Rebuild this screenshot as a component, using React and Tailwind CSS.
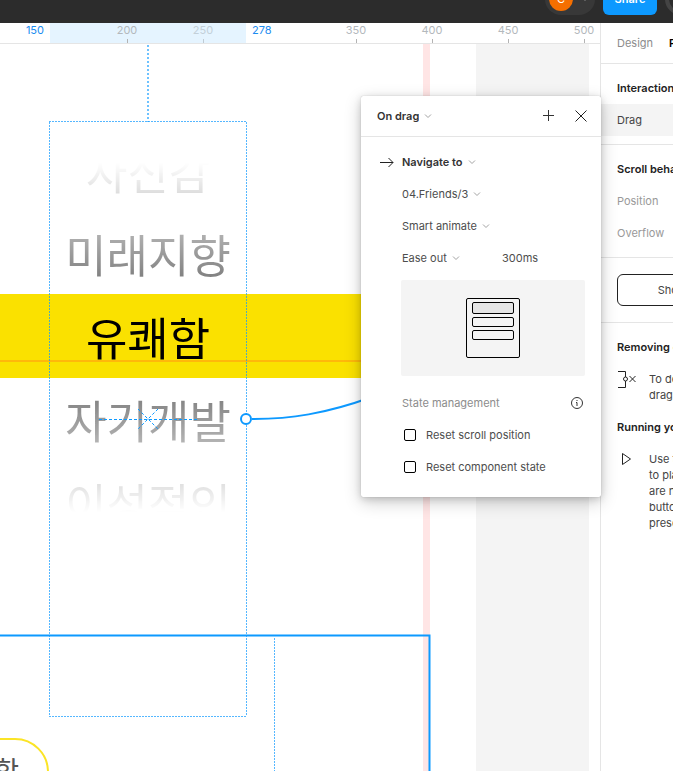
import React from "react";

function Chevron() {
  return (
    <svg width="8" height="8" viewBox="0 0 8 8" fill="none" stroke="#a3a3a3" aria-hidden="true" className="pointer-events-none shrink-0">
      <path d="M1 2.5 4 5.5 7 2.5" />
    </svg>
  );
}

function Dropdown({ label, value, strong }) {
  return (
    <span className="flex items-center gap-[5px]">
      <select
        aria-label={label}
        defaultValue={value}
        className={
          strong
            ? "field-sizing-content appearance-none bg-transparent font-semibold text-[#333]"
            : "field-sizing-content appearance-none bg-transparent text-[#4d4d4d]"
        }
      >
        <option>{value}</option>
      </select>
      <Chevron />
    </span>
  );
}

function Toolbar() {
  return (
    <header className="flex h-[23px] shrink-0 justify-end overflow-hidden bg-[#2c2c2c] font-['Inter',sans-serif] text-[11px]">
      <div className="flex w-32 items-end gap-2 pb-2">
        <button className="flex h-8 w-[50px] shrink-0 items-center gap-2 rounded-full bg-[#383838] pl-1 text-white">
          <span className="flex size-6 items-center justify-center rounded-full bg-[#f56f00]">C</span>
          <svg width="8" height="8" viewBox="0 0 8 8" fill="none" stroke="#8c8c8c" aria-hidden="true">
            <path d="M1 2.5 4 5.5 7 2.5" />
          </svg>
        </button>
        <button className="h-8 w-[54px] shrink-0 rounded-md bg-[#0d99ff] font-semibold text-white">Share</button>
        <button aria-label="Present" className="h-8 w-16 shrink-0 rounded-full border-4 border-[#444]" />
      </div>
    </header>
  );
}

function RulerMark({ value, faint }) {
  return (
    <div className="flex w-[76px] shrink-0 flex-col items-center justify-between">
      <span className={faint ? "text-[#c3d0d9]" : "text-[#b3b8bc]"}>{value}</span>
      <span className={faint ? "h-1 w-px bg-[#c0cbd3]" : "h-1 w-px bg-[#b3b3b3]"} />
    </div>
  );
}

function Ruler() {
  return (
    <div className="flex h-[21px] shrink-0 overflow-hidden border-b border-[#e5e5e5] bg-white text-[11px] leading-[15px]">
      <span className="w-[50px] shrink-0 pr-[6px] text-right text-[#1c8cf0]">150</span>
      <div className="flex w-[196px] shrink-0 bg-[#e5f4ff] pl-[39px]">
        <RulerMark value="200" />
        <RulerMark value="250" faint />
      </div>
      <span className="w-[72px] shrink-0 pl-[6px] text-[#1c8cf0]">278</span>
      <RulerMark value="350" />
      <RulerMark value="400" />
      <RulerMark value="450" />
      <RulerMark value="500" />
    </div>
  );
}

const WORDS = ["자신감", "미래지향", "유쾌함", "자기개발", "이성적인"];

function Canvas() {
  return (
    <div className="relative min-h-0 flex-1 overflow-hidden bg-white">
      <div className="absolute inset-y-0 left-[423px] w-[7px] bg-[#ffe5e5]" />
      <div className="absolute inset-y-0 left-[476px] w-[113px] bg-[#f4f4f4]" />
      <div className="absolute top-[250px] left-0 h-[84px] w-[430px] bg-[#fae100]">
        <div className="mt-[66px] h-[2px] bg-[#ffb80a]" />
      </div>

      <div className="absolute top-[85px] left-[50px] flex w-[196px] flex-col text-center font-['Noto_Sans_CJK_KR',sans-serif] text-[45px] leading-[83px] text-black [mask-image:linear-gradient(to_bottom,transparent_34px,rgba(0,0,0,0.5)_150px,rgba(0,0,0,0.5)_165px,black_165px,black_249px,rgba(0,0,0,0.52)_249px,rgba(0,0,0,0.47)_273px,transparent_383px)]">
        {WORDS.map((word) => (
          <span key={word}>{word}</span>
        ))}
      </div>

      <div className="absolute top-[694px] -left-40 flex h-20 w-[209px] justify-end rounded-[34px] border-2 border-[#fbe426] bg-white pt-[14px] pr-7 font-['Noto_Sans_CJK_KR',sans-serif] text-[27px] leading-8 text-[#555]">
        유쾌함
      </div>

      <svg className="absolute inset-0" width="600" height="728" viewBox="0 44 600 728" fill="none" stroke="#0d99ff" aria-hidden="true">
        <path d="M148 45V122" strokeWidth="2" strokeOpacity=".6" strokeDasharray="2 2" />
        <path d="M49.5 122V716M246.5 122V716M49 121.5H247M49 716.5H247" strokeOpacity=".7" strokeDasharray="2 1" />
        <path d="M0 635.5H429.5V780" strokeWidth="2" />
        <path d="M274.5 638V780" strokeOpacity=".7" strokeDasharray="2 1" />
        <path d="M99 419.5H197M138 409 148 419 138 429M158 409 148 419 158 429" strokeDasharray="3 2" />
        <path d="M252 419C290 419 325 414 372 397" strokeWidth="2" />
        <circle cx="246" cy="419" r="5" fill="white" strokeWidth="2" />
      </svg>
    </div>
  );
}

function CheckRow({ label }) {
  return (
    <label className="flex h-8 items-center gap-[10px] pl-[3px]">
      <input type="checkbox" className="size-3 appearance-none rounded-[2px] border border-black bg-white" />
      {label}
    </label>
  );
}

function InteractionPanel() {
  return (
    <section className="absolute top-[96px] right-[72px] w-60 rounded-[2px] bg-white pb-[14px] font-['Inter',sans-serif] text-[11px] leading-4 text-[#4d4d4d] shadow-[0_5px_17px_rgba(0,0,0,0.2),0_2px_7px_rgba(0,0,0,0.15),0_0_1px_rgba(0,0,0,0.3)]">
      <div className="flex h-[41px] items-center border-b border-[#e5e5e5] pr-[14px] pl-4">
        <Dropdown label="Trigger" value="On drag" strong />
        <button aria-label="Add action" className="ml-auto">
          <svg width="12" height="12" viewBox="0 0 12 12" stroke="#333" aria-hidden="true">
            <path d="M5.5 0V11M0 5.5H11" />
          </svg>
        </button>
        <button aria-label="Close" className="ml-5">
          <svg width="12" height="12" viewBox="0 0 12 12" stroke="#222" aria-hidden="true">
            <path d="M.5 .5 11.500 11.500M11.500 .5 .5 11.500" />
          </svg>
        </button>
      </div>
      <div className="flex pt-[9px] pr-4">
        <div className="flex h-8 w-10 shrink-0 items-center justify-end pr-[7px]">
          <svg width="14" height="11" viewBox="0 0 14 11" fill="none" stroke="#222" aria-hidden="true">
            <path d="M0 5.500H13M8.500 1 13 5.500 8.500 10" />
          </svg>
        </div>
        <div className="flex flex-1 flex-col">
          <div className="flex h-8 items-center pl-px"><Dropdown label="Action" value="Navigate to" strong /></div>
          <div className="flex h-8 items-center pl-px"><Dropdown label="Destination" value="04.Friends/3" /></div>
          <div className="flex h-8 items-center pl-px"><Dropdown label="Animation" value="Smart animate" /></div>
          <div className="flex h-8 items-center pl-px">
            <div className="w-[100px]"><Dropdown label="Easing" value="Ease out" /></div>
            <input aria-label="Duration" defaultValue="300ms" className="w-16 bg-transparent" />
          </div>
          <div className="mt-[6px] mb-[11px] flex h-24 items-center justify-center rounded-[2px] bg-[#f4f4f4]">
            <svg width="54" height="60" viewBox="0 0 54 60" fill="none" stroke="black" aria-hidden="true">
              <rect x=".5" y=".5" width="53" height="59" rx="1.5" />
              <rect x="6.5" y="4.5" width="41" height="11" rx="1.5" fill="#e5e5e5" />
              <rect x="6.5" y="19.5" width="41" height="9" rx="1.5" />
              <rect x="6.5" y="32.5" width="41" height="9" rx="1.5" />
            </svg>
          </div>
          <div className="flex h-8 items-center justify-between pr-[2px] pl-px text-[#8c8c8c]">
            State management
            <svg width="12" height="12" viewBox="0 0 12 12" fill="none" stroke="#333" aria-hidden="true">
              <circle cx="6" cy="6" r="5.5" />
              <path d="M5 5.5H6V9M6 3V4" />
            </svg>
          </div>
          <CheckRow label="Reset scroll position" />
          <CheckRow label="Reset component state" />
        </div>
      </div>
    </section>
  );
}

function Sidebar() {
  return (
    <aside className="w-[73px] shrink-0 overflow-hidden border-l border-[#e5e5e5] bg-white text-[11px] leading-4 text-[#444]">
      <div className="w-60">
        <nav className="flex h-[41px] items-center gap-4 border-b border-[#e5e5e5] px-4">
          <a href="#design" className="text-[#8c8c8c]">Design</a>
          <a href="#prototype" className="font-semibold text-black">Prototype</a>
        </nav>
        <section className="border-b border-[#e5e5e5] py-2">
          <h2 className="flex h-8 items-center px-4 font-semibold text-[#222]">Interactions</h2>
          <div className="flex h-8 items-center bg-[#f4f4f4] px-4">Drag</div>
        </section>
        <section className="border-b border-[#e5e5e5] px-4 py-2">
          <h2 className="flex h-8 items-center font-semibold text-[#222]">Scroll behavior</h2>
          <p className="flex h-8 items-center text-[#999]">Position</p>
          <p className="flex h-8 items-center text-[#999]">Overflow</p>
        </section>
        <div className="border-b border-[#e5e5e5] p-4">
          <button className="block h-8 w-full rounded-md border border-[#222]">Show prototype settings</button>
        </div>
        <section className="px-4 pt-2">
          <h2 className="flex h-8 items-center font-semibold text-[#222]">Removing connections</h2>
          <div className="flex gap-[13px] py-2">
            <svg width="19" height="18" viewBox="0 0 19 18" fill="none" stroke="#222" className="shrink-0" aria-hidden="true">
              <path d="M1 .5H8.500V6M8.500 10V16.500H1M12.500 5 18.500 11M18.500 5 12.500 11" />
              <circle cx="8.500" cy="8" r="2" />
            </svg>
            <p>To delete a connection, click and<br />drag it away from the frame.</p>
          </div>
          <h2 className="flex h-8 items-center font-semibold text-[#222]">Running your prototype</h2>
          <div className="flex gap-[13px] py-2">
            <svg width="19" height="16" viewBox="0 0 19 16" fill="none" stroke="#222" className="shrink-0" aria-hidden="true">
              <path d="M5.500 2.500V13.500L13.500 8Z" />
            </svg>
            <p>Use the play button in the toolbar<br />to play your prototype. If there<br />are no connections, the play<br />button can be used to play a<br />presentation of your frames.</p>
          </div>
        </section>
      </div>
    </aside>
  );
}

export default function App() {
  return (
    <div className="relative flex h-screen flex-col overflow-hidden font-['Inter',sans-serif]">
      <Toolbar />
      <div className="flex min-h-0 flex-1">
        <main className="flex min-w-0 flex-1 flex-col">
          <Ruler />
          <Canvas />
        </main>
        <Sidebar />
      </div>
      <InteractionPanel />
    </div>
  );
}
